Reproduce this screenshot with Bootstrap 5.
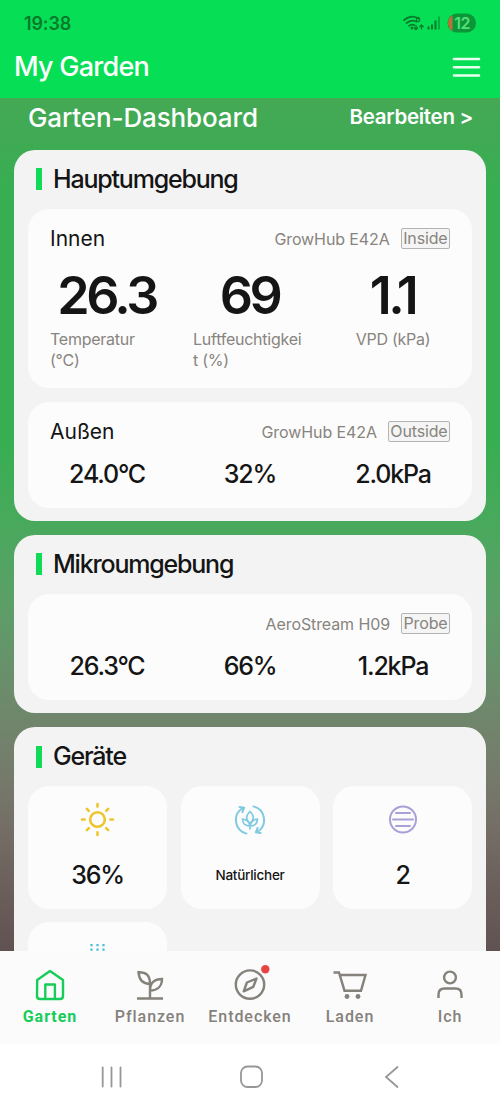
<!DOCTYPE html>
<html lang="de">
<head>
<meta charset="utf-8">
<meta name="viewport" content="width=device-width, initial-scale=1">
<title>My Garden</title>
<link rel="stylesheet" href="https://cdn.jsdelivr.net/npm/bootstrap@5.3.0/dist/css/bootstrap.min.css">
<style>
  html, body { height: 100%; }
  body { font-family: Inter, "Liberation Sans", sans-serif; color: #151515; overflow: hidden; }
  .app-shell { height: 1111px; max-width: 500px; }
  .top-area { height: 98px; background: #06df55; flex: none; }
  .status-row { height: 46px; padding: 0 24px; }
  .clock { font-size: 18px; font-weight: 600; color: #087a2b; letter-spacing: -.15px; }
  .title-row { height: 42px; padding: 0 19px 0 14px; }
  .app-title { font-size: 27px; font-weight: 500; letter-spacing: -.75px; line-height: 42px; }
  .scroll-area { background: linear-gradient(#45a855 0, #38ae52 90px, #38ae52 345px, #48a95c 425px, #5ba067 500px, #6d8a6c 600px, #757c6b 670px, #756f67 725px, #6b5f5b 790px, #605252 853px); padding: 0 14px; }
  .dash-row { height: 51.5px; padding: 0 13px 12px 14px; flex: none; }
  .dash-title { font-size: 26px; font-weight: 500; letter-spacing: -.12px; line-height: 40px; }
  .dash-edit { font-size: 20.5px; font-weight: 600; letter-spacing: -.3px; }
  .group-card { background: #f3f3f3; border: 0; border-radius: 21px; padding: 0 14px 13px; margin-bottom: 14px; flex: none; }
  .group-title { height: 59px; font-size: 25px; font-weight: 500; letter-spacing: -1.2px; padding: 0 0 1px 8px; gap: 11px; }
  .group-title::before { content: ""; width: 6px; height: 22px; background: #10da58; margin-top: 1px; }
  .panel { background: #fcfcfc; border-radius: 21px; padding: 0 22px; }
  .panel-head { height: 60px; }
  .panel-name { font-size: 21px; letter-spacing: 0; }
  .device { font-size: 16px; color: #88847e; letter-spacing: -.1px; }
  .tag { font-size: 16px; line-height: 19px; border: 1px solid #b5b3b0; border-radius: 2px; background: #f5f5f5; padding: 0 1.5px; margin-left: 11px; letter-spacing: -.15px; }
  .metrics { display: grid; grid-template-columns: 114px 114px 114px; justify-content: space-between; text-align: center; }
  .metrics.mid { margin-top: -1.5px; }
  .big { font-size: 52px; line-height: 58px; font-weight: 600; letter-spacing: -3.5px; margin-top: -2px; padding-right: 1px; }
  .caption-text { font-size: 16px; line-height: 21px; color: #88847e; text-align: left; white-space: nowrap; letter-spacing: -.25px; margin-top: 4px; }
  .mid { font-size: 25px; line-height: 28px; font-weight: 500; letter-spacing: -1.2px; white-space: nowrap; }
  .tiles { display: grid; grid-template-columns: repeat(3, 139px); justify-content: space-between; row-gap: 13px; }
  .tile { height: 123px; background: #fcfcfc; border-radius: 21px; padding-top: 16px; }
  .tile .mid { margin-top: 20px; line-height: 34px; }
  .tile .small-val { font-size: 13.5px; letter-spacing: -.25px; }
  .tab-bar { height: 93px; background: #fbfbfb; flex: none; }
  .tab-item { width: 100px; padding-top: 14px; font-family: Roboto, sans-serif; font-size: 16px; font-weight: 500; letter-spacing: .95px; color: #85817b; line-height: 24px; }
  .tab-item.current { color: #17cd59; font-weight: 700; }
  .tab-item svg { width: 40px; height: 40px; fill: none; stroke: currentColor; stroke-width: 2.4; }
  .sys-bar { height: 67px; background: #fff; flex: none; }
</style>
</head>
<body>
<div class="app-shell d-flex flex-column">
  <header class="top-area">
    <div class="status-row d-flex align-items-center justify-content-between">
      <span class="clock">19:38</span>
      <svg width="76" height="22" viewBox="400 12 76 22" fill="none">
        <g stroke="#087a2b" stroke-width="1.7">
          <path d="M403.5 20.5Q411.500 13.500 419.500 19M406 23.500Q411.500 18.500 417 22M408.500 26.300Q411.500 23.500 415 25.500"/>
          <path d="M416 25v4.500m-2-2 2 2 2-2M421.500 29.500V25m-2 2 2-2 2 2" stroke-width="1.3"/>
          <ellipse cx="418" cy="19.500" rx="1.600" ry="2.200" stroke-width="1.200"/>
        </g>
        <circle cx="412" cy="28" r="1.500" fill="#087a2b"/>
        <path d="M428.500 29.500v-3M432 29.500v-5M435.500 29.500v-9" stroke="#087a2b" stroke-width="2"/>
        <path d="M439 29.500v-13" stroke="#08a63b" stroke-width="1.800"/>
        <rect x="447.500" y="13.500" width="28.500" height="19" rx="9.500" fill="#0b9638"/>
        <path d="M452.500 14.900a9.500 9.500 0 0 0 0 16.200z" fill="#b9713c"/>
        <text x="462" y="29" text-anchor="middle" font-family="Inter, sans-serif" font-size="16" font-weight="600" letter-spacing="-.5" fill="#54df7c">12</text>
      </svg>
    </div>
    <div class="title-row d-flex align-items-center justify-content-between text-white">
      <h1 class="app-title mb-0">My Garden</h1>
      <svg width="29" height="22" viewBox="0 0 29 22" stroke="#e9fff0" stroke-width="2.600" stroke-linecap="round"><path d="M2 3h25M2 11.300h25M2 19.500h25"/></svg>
    </div>
  </header>

  <main class="scroll-area d-flex flex-column flex-grow-1 overflow-hidden">
    <div class="dash-row d-flex align-items-center justify-content-between text-white">
      <h2 class="dash-title mb-0">Garten-Dashboard</h2>
      <span class="dash-edit">Bearbeiten &gt;</span>
    </div>

    <section class="group-card card">
      <h3 class="group-title d-flex align-items-center mb-0">Hauptumgebung</h3>
      <div class="panel" style="height:179px;margin-bottom:14px">
        <div class="panel-head d-flex align-items-center">
          <span class="panel-name me-auto">Innen</span><span class="device">GrowHub E42A</span><span class="tag device">Inside</span>
        </div>
        <div class="metrics">
          <div><div class="big">26.3</div><div class="caption-text">Temperatur<br>(°C)</div></div>
          <div><div class="big">69</div><div class="caption-text">Luftfeuchtigkei<br>t (%)</div></div>
          <div><div class="big">1.1</div><div class="caption-text text-center">VPD (kPa)</div></div>
        </div>
      </div>
      <div class="panel" style="height:106px">
        <div class="panel-head d-flex align-items-center">
          <span class="panel-name me-auto">Außen</span><span class="device">GrowHub E42A</span><span class="tag device">Outside</span>
        </div>
        <div class="metrics mid"><span>24.0°C</span><span>32%</span><span>2.0kPa</span></div>
      </div>
    </section>

    <section class="group-card card">
      <h3 class="group-title d-flex align-items-center mb-0">Mikroumgebung</h3>
      <div class="panel" style="height:106.500px">
        <div class="panel-head d-flex align-items-center justify-content-end">
          <span class="device">AeroStream H09</span><span class="tag device">Probe</span>
        </div>
        <div class="metrics mid"><span>26.3°C</span><span>66%</span><span>1.2kPa</span></div>
      </div>
    </section>

    <section class="group-card card">
      <h3 class="group-title d-flex align-items-center mb-0">Geräte</h3>
      <div class="tiles text-center">
        <div class="tile">
          <svg class="d-block mx-auto" width="36" height="36" viewBox="-17.500 -17.500 36 36" fill="none" stroke="#efc52e" stroke-width="2.600" stroke-linecap="round"><circle r="7.300"/><path d="M0-15.500v2.600M0 12.900v2.600M-15.500 0h2.600M12.900 0h2.600M-10.600-10.600l1.900 1.900M8.700 8.700l1.900 1.900M-10.600 10.600l1.900-1.900M8.700-8.700l1.900-1.900"/></svg>
          <div class="mid">36%</div>
        </div>
        <div class="tile">
          <svg class="d-block mx-auto" width="36" height="36" viewBox="-18 -18 36 36" fill="none" stroke="#80cbe0" stroke-width="2" stroke-linecap="round" stroke-linejoin="round">
            <path d="M-3.500 13.600A14 14 0 0 1-8-11.500M-10.500-13l4.700.7-1.800 4.300M3.500-13.600A14 14 0 0 1 8 11.500M10.500 13l-4.700-.7 1.800-4.300"/>
            <path d="M0 9V4M0-8.500C-4.500-4-4.500-1 0 3.500 4.500-1 4.500-4 0-8.500ZM0 6C-1 1.500-3.500-.5-7.500-1-7.300 3.500-4.500 6 0 6ZM0 6C1 1.500 3.500-.5 7.500-1 7.300 3.500 4.500 6 0 6Z" stroke-width="1.700"/>
          </svg>
          <div class="mid small-val">Natürlicher</div>
        </div>
        <div class="tile">
          <svg class="d-block mx-auto" width="36" height="36" viewBox="-18 -17.500 36 36" fill="none" stroke="#aaa0d8" stroke-width="2" stroke-linecap="round"><circle r="13"/><path d="M-7-6.500H7M-10 0H10M-7 6.500H7"/></svg>
          <div class="mid">2</div>
        </div>
        <div class="tile">
          <svg class="d-block mx-auto" width="36" height="36" viewBox="-17.500 -18 36 36" stroke="#43bfd3" stroke-width="2.200" stroke-dasharray="2.200 2.300"><path d="M-6-12V12M0-12V12M6-12V12"/></svg>
        </div>
      </div>
    </section>
  </main>

  <nav class="tab-bar d-flex text-center">
    <div class="tab-item current"><svg class="d-block mx-auto" viewBox="0 0 40 40" stroke-linejoin="round"><path d="M7.200 15 20 6 33 15v16q0 3-3 3H10q-3 0-3-3z"/><path d="M15.300 33.500V19.500h9.600v14"/></svg>Garten</div>
    <div class="tab-item"><svg class="d-block mx-auto" viewBox="0 0 40 40"><path d="M7 33.500h26M20 33V18M20 19C12 19 9 14 8.500 7.200 16 7 20 10 20 19ZM20 25.500C20 18 24.500 14 32 14 32 21 27.500 25.500 20 25.500Z"/></svg>Pflanzen</div>
    <div class="tab-item position-relative"><svg class="d-block mx-auto" viewBox="0 0 40 40"><circle cx="20" cy="19.600" r="14.200"/><path d="m26.500 13.500-3.200 8.300-9.600 4.500 3.200-8.800z" stroke-linejoin="round"/><circle cx="35.300" cy="4.200" r="4.200" fill="#e94444" stroke="none"/></svg>Entdecken</div>
    <div class="tab-item"><svg class="d-block mx-auto" viewBox="0 0 40 40"><path d="M3.500 7.500H9l5.500 18.200H31L35.500 10H10"/><circle cx="17" cy="31.500" r="2.400" fill="currentColor" stroke="none"/><circle cx="28" cy="31.500" r="2.400" fill="currentColor" stroke="none"/></svg>Laden</div>
    <div class="tab-item"><svg class="d-block mx-auto" viewBox="0 0 40 40"><circle cx="20" cy="12.500" r="5.900"/><path d="M8.500 33v-3.500q0-6 6-6h11q6 0 6 6V33"/></svg>Ich</div>
  </nav>

  <footer class="sys-bar">
    <svg class="d-block" width="500" height="67" viewBox="0 1044 500 67" fill="none" stroke="#979797" stroke-width="1.800" stroke-linecap="round">
      <path d="M102.700 1067.500v19M111.500 1067.500v19M120.500 1067.500v19"/>
      <rect x="241" y="1066.500" width="21" height="20.500" rx="6.500"/>
      <path d="M397.500 1067 386 1077l11.500 10"/>
    </svg>
  </footer>
</div>
<script src="https://cdn.jsdelivr.net/npm/bootstrap@5.3.0/dist/js/bootstrap.bundle.min.js"></script>
</body>
</html>
